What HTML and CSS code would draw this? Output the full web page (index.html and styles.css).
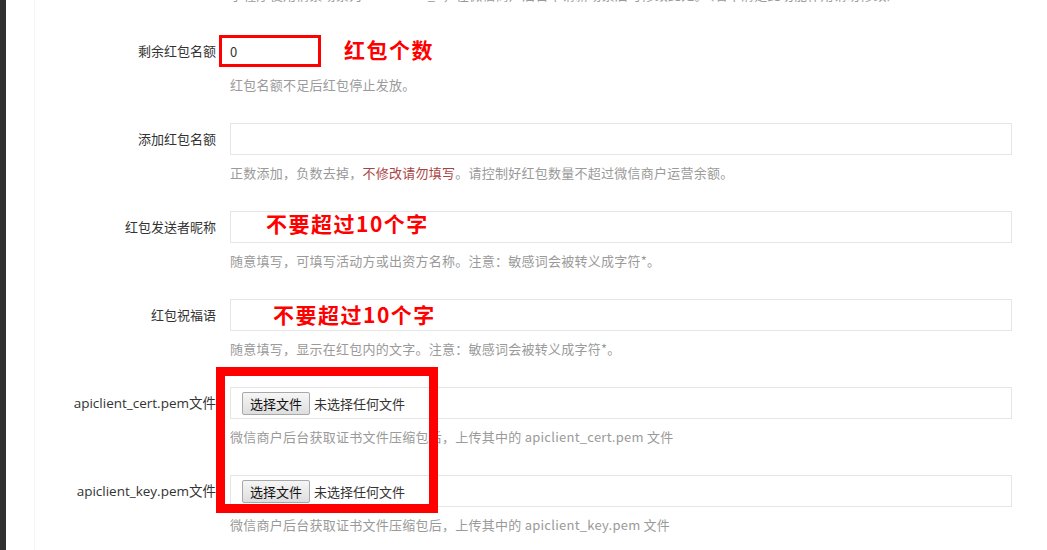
FILE: index.html
```html
<!DOCTYPE html>
<html lang="zh-CN">
<head>
  <meta charset="UTF-8" />
  <title>红包设置</title>
  <link rel="stylesheet" href="styles.css">
</head>
<body>
  <div class="side"></div>

  <div class="main">
    <div class="panel">
      <p class="help first">小程序使用情景场景为 PRODUCT_2，在微信商户后台申请新场景后可修改此处。（若不清楚此功能作用请勿修改）</p>

      <!-- 剩余红包名额 -->
      <div class="row">
        <label>剩余红包名额</label>
        <div class="field">
          <div class="line">
            <div class="input small marked">0</div>
            <span class="note">红包个数</span>
          </div>
          <p class="help">红包名额不足后红包停止发放。</p>
        </div>
      </div>

      <!-- 添加红包名额 -->
      <div class="row">
        <label>添加红包名额</label>
        <div class="field">
          <div class="input"></div>
          <p class="help">正数添加，负数去掉，<span class="warn">不修改请勿填写</span>。请控制好红包数量不超过微信商户运营余额。</p>
        </div>
      </div>

      <!-- 发送者昵称 -->
      <div class="row">
        <label>红包发送者昵称</label>
        <div class="field">
          <div class="input"><span class="note in-a">不要超过10个字</span></div>
          <p class="help">随意填写，可填写活动方或出资方名称。注意：敏感词会被转义成字符*。</p>
        </div>
      </div>

      <!-- 祝福语 -->
      <div class="row">
        <label>红包祝福语</label>
        <div class="field">
          <div class="input"><span class="note in-b">不要超过10个字</span></div>
          <p class="help">随意填写，显示在红包内的文字。注意：敏感词会被转义成字符*。</p>
        </div>
      </div>

      <!-- 证书 -->
      <div class="row">
        <label class="latin">apiclient_cert.pem文件</label>
        <div class="field">
          <div class="input file">
            <button type="button">选择文件</button>
            <span>未选择任何文件</span>
          </div>
          <p class="help">微信商户后台获取证书文件压缩包后，上传其中的 apiclient_cert.pem 文件</p>
        </div>
      </div>

      <div class="row">
        <label class="latin">apiclient_key.pem文件</label>
        <div class="field">
          <div class="input file">
            <button type="button">选择文件</button>
            <span>未选择任何文件</span>
          </div>
          <p class="help">微信商户后台获取证书文件压缩包后，上传其中的 apiclient_key.pem 文件</p>
        </div>
      </div>
    </div>
  </div>

  <div class="mark-box"></div>
</body>
</html>
```

FILE: styles.css
```css
* {
  margin: 0;
  padding: 0;
  box-sizing: border-box;
}

html, body {
  height: 100%;
}

body {
  display: flex;
  background: #fff;
  overflow: hidden;
  font-family: "Noto Sans CJK SC", sans-serif;
  font-size: 13px;
  color: #333;
}

.side {
  width: 6px;
  flex: none;
  background: #303030;
}

.main {
  flex: 1;
  padding-left: 28px;
  padding-right: 35px;
}

.panel {
  display: flow-root;
  min-height: 100vh;
  border-left: 1px solid #f6f6f6;
}

.help {
  margin-top: 8px;
  line-height: 20px;
  font-size: 13px;
  letter-spacing: 0.25px;
  color: #9a9a9a;
}

.help.first {
  margin-top: -15px;
  margin-left: 195px;
  margin-bottom: 30px;
  white-space: nowrap;
}

.warn {
  color: #a94442;
}

.row {
  display: flex;
  margin-bottom: 28px;
}

.row label {
  width: 182px;
  flex: none;
  text-align: right;
  line-height: 32px;
  padding-right: 1px;
  margin-right: 13px;
}

.row label.latin {
  font-family: "Open Sans", "Noto Sans CJK SC", sans-serif;
  font-size: 13.5px;
}

.field {
  flex: 1;
}

.line {
  display: flex;
  align-items: center;
}

.input {
  height: 32px;
  border: 1px solid #e6e6e6;
  display: flex;
  align-items: center;
  padding: 0 10px;
}

.input.small {
  width: 102px;
}

.input.marked {
  margin-left: -11px;
  border: 3px solid #f00;
  padding: 0 8px;
  font-size: 13px;
}

.note {
  color: #f00;
  font-weight: bold;
  font-size: 21px;
  letter-spacing: 1.5px;
  line-height: 24px;
  font-family: "Noto Sans CJK SC", sans-serif;
}

.line .note {
  margin-left: 23px;
  margin-top: -5px;
}

.note.in-a {
  margin-left: 25px;
  margin-top: -8px;
}

.note.in-b {
  margin-left: 32px;
  margin-top: -2px;
}

.input.file {
  padding: 0 11px;
  gap: 4px;
}

.input.file button {
  height: 23px;
  padding: 0 7px;
  font-family: "Noto Sans CJK SC", sans-serif;
  font-size: 13px;
  color: #111;
  border: 1px solid #a8a8a8;
  border-radius: 2px;
  background: linear-gradient(#f6f6f6, #dedede);
}

.mark-box {
  position: absolute;
  left: 216px;
  top: 367px;
  width: 222px;
  height: 146px;
  border: 9px solid #f00;
  pointer-events: none;
}
```
